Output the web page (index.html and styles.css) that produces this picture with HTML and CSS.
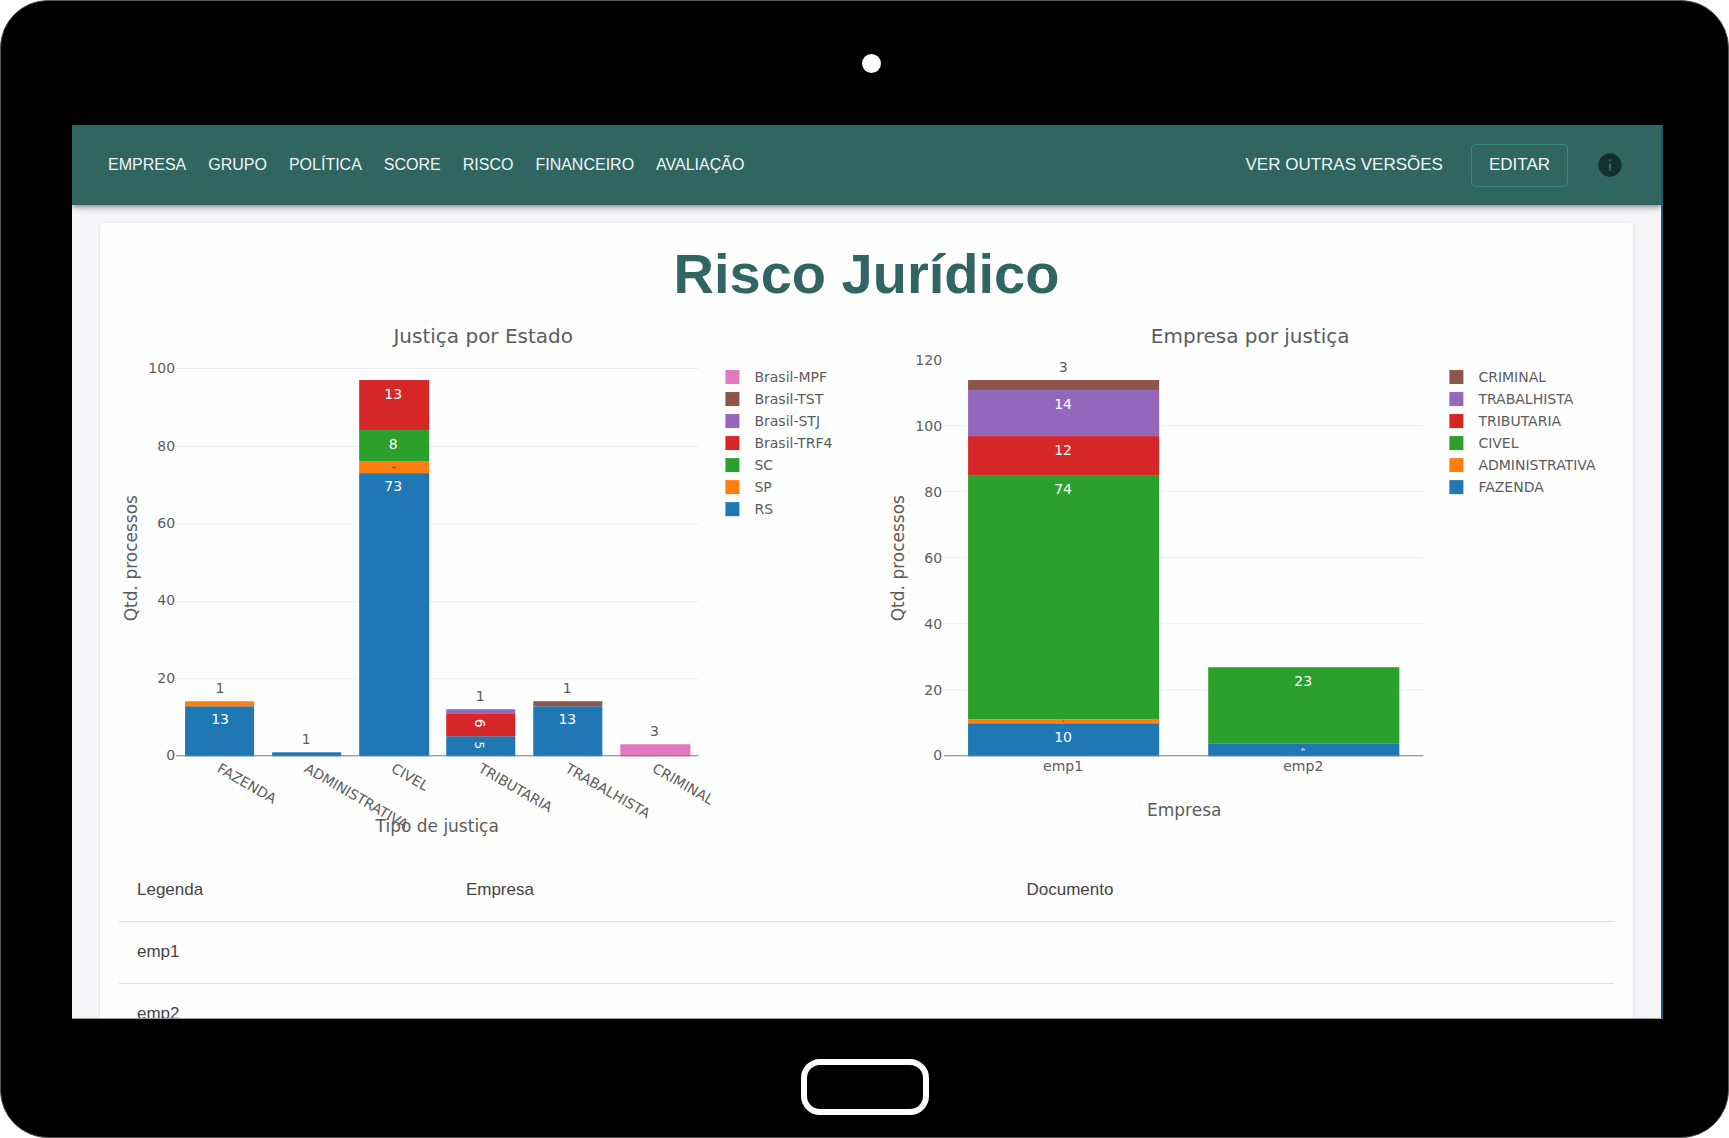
FILE: index.html
```html
<!DOCTYPE html>
<html lang="pt-BR">
<head>
  <meta charset="utf-8">
  <meta name="viewport" content="width=device-width, initial-scale=1">
  <title>Risco Jurídico</title>
  <link rel="stylesheet" href="styles.css">
</head>
<body>
<div class="device">
  <div class="bezel bezel-top"><span class="camera"></span></div>

  <div class="screen">
    <header class="appbar">
      <nav class="nav" aria-label="Principal">
        <a href="#empresa">EMPRESA</a>
        <a href="#grupo">GRUPO</a>
        <a href="#politica">POLÍTICA</a>
        <a href="#score">SCORE</a>
        <a href="#risco">RISCO</a>
        <a href="#financeiro">FINANCEIRO</a>
        <a href="#avaliacao">AVALIAÇÃO</a>
      </nav>
      <div class="actions">
        <button class="btn" type="button">VER OUTRAS VERSÕES</button>
        <button class="btn btn-outlined" type="button">EDITAR</button>
        <button class="btn btn-icon" type="button" aria-label="Informações">
          <svg viewBox="0 0 24 24" aria-hidden="true"><path d="M12 2C6.480 2 2 6.480 2 12s4.480 10 10 10 10-4.480 10-10S17.520 2 12 2zm1 15h-2v-6h2v6zm0-8h-2V7h2v2z"/></svg>
        </button>
      </div>
    </header>

    <main class="content">
      <section class="card">
        <h1 class="title">Risco Jurídico</h1>

        <div class="charts">
          <svg class="chart" viewBox="0 0 766 549" role="img" aria-label="Justiça por Estado">
            <text class="chart-title" x="383" y="33">Justiça por Estado</text>
            <text class="axis-title" transform="translate(37 248) rotate(-90)">Qtd. processos</text>
            <g transform="translate(76 446)">
              <path class="grid" d="M0-77.500H522M0-154.500H522M0-232.500H522M0-309.500H522M0-387.500H522"/>
              <g class="tick-y">
                <text x="-1" y="4">0</text>
                <text x="-1" y="-73">20</text>
                <text x="-1" y="-151">40</text>
                <text x="-1" y="-228">60</text>
                <text x="-1" y="-305">80</text>
                <text x="-1" y="-383">100</text>
              </g>
              <rect class="blue" x="9" y="-50" width="69" height="50"/>
              <rect class="orange" x="9" y="-55" width="69" height="5"/>
              <rect class="blue" x="96" y="-4" width="69" height="4"/>
              <rect class="blue" x="183" y="-283" width="70" height="283"/>
              <rect class="orange" x="183" y="-295" width="70" height="12"/>
              <rect class="green" x="183" y="-326" width="70" height="31"/>
              <rect class="red" x="183" y="-376" width="70" height="50"/>
              <rect class="blue" x="270" y="-20" width="69" height="20"/>
              <rect class="red" x="270" y="-43" width="69" height="23"/>
              <rect class="purple" x="270" y="-47" width="69" height="4"/>
              <rect class="blue" x="357" y="-50" width="69" height="50"/>
              <rect class="brown" x="357" y="-55" width="69" height="5"/>
              <rect class="pink" x="444" y="-12" width="70" height="12"/>
              <path class="baseline" d="M0-.500H522"/>
              <g class="value">
                <text x="44" y="-63">1</text>
                <text x="130" y="-12">1</text>
                <text x="304" y="-55">1</text>
                <text x="391" y="-63">1</text>
                <text x="478" y="-20">3</text>
              </g>
              <g class="value inside">
                <text x="44" y="-32">13</text>
                <text x="217" y="-357">13</text>
                <text x="217" y="-307">8</text>
                <text x="217" y="-265">73</text>
                <text x="391" y="-32">13</text>
                <text class="s14" transform="translate(299 -33) rotate(90)">6</text>
                <text class="s12" transform="translate(299 -11) rotate(90)">5</text>
              </g>
              <text class="value s5 dark" transform="translate(216 -289) rotate(90)">3</text>
              <g class="tick-tilt">
                <text transform="translate(40 15) rotate(30)">FAZENDA</text>
                <text transform="translate(127 15) rotate(30)">ADMINISTRATIVA</text>
                <text transform="translate(214 15) rotate(30)">CIVEL</text>
                <text transform="translate(301 15) rotate(30)">TRIBUTARIA</text>
                <text transform="translate(388 15) rotate(30)">TRABALHISTA</text>
                <text transform="translate(475 15) rotate(30)">CRIMINAL</text>
              </g>
              <text class="axis-title" x="261" y="76">Tipo de justiça</text>
            </g>
            <g class="legend" transform="translate(625 60)">
              <rect class="pink" y="0" width="14" height="14"/><text x="29" y="12">Brasil-MPF</text>
              <rect class="brown" y="22" width="14" height="14"/><text x="29" y="34">Brasil-TST</text>
              <rect class="purple" y="44" width="14" height="14"/><text x="29" y="56">Brasil-STJ</text>
              <rect class="red" y="66" width="14" height="14"/><text x="29" y="78">Brasil-TRF4</text>
              <rect class="green" y="88" width="14" height="14"/><text x="29" y="100">SC</text>
              <rect class="orange" y="110" width="14" height="14"/><text x="29" y="122">SP</text>
              <rect class="blue" y="132" width="14" height="14"/><text x="29" y="144">RS</text>
            </g>
          </svg>

          <svg class="chart" viewBox="0 0 766 549" role="img" aria-label="Empresa por justiça">
            <text class="chart-title" x="383" y="33">Empresa por justiça</text>
            <text class="axis-title" transform="translate(37 248) rotate(-90)">Qtd. processos</text>
            <g transform="translate(77 446)">
              <path class="grid" d="M0-66.500H479M0-132.500H479M0-198.500H479M0-264.500H479M0-330.500H479"/>
              <g class="tick-y">
                <text x="-2" y="4">0</text>
                <text x="-2" y="-61">20</text>
                <text x="-2" y="-127">40</text>
                <text x="-2" y="-193">60</text>
                <text x="-2" y="-259">80</text>
                <text x="-2" y="-325">100</text>
                <text x="-2" y="-391">120</text>
              </g>
              <rect class="blue" x="24" y="-33" width="191" height="33"/>
              <rect class="orange" x="24" y="-37" width="191" height="4"/>
              <rect class="green" x="24" y="-281" width="191" height="244"/>
              <rect class="red" x="24" y="-320" width="191" height="39"/>
              <rect class="purple" x="24" y="-366" width="191" height="46"/>
              <rect class="brown" x="24" y="-376" width="191" height="10"/>
              <rect class="blue" x="264" y="-13" width="191" height="13"/>
              <rect class="green" x="264" y="-89" width="191" height="76"/>
              <path class="baseline" d="M0-.500H479"/>
              <g class="value">
                <text x="119" y="-384">3</text>
                <text x="119" y="15">emp1</text>
                <text x="359" y="15">emp2</text>
              </g>
              <g class="value inside">
                <text x="119" y="-347">14</text>
                <text x="119" y="-301">12</text>
                <text x="119" y="-262">74</text>
                <text x="119" y="-14">10</text>
                <text x="359" y="-70">23</text>
                <text class="s5" transform="translate(357 -7) rotate(90)">4</text>
              </g>
              <text class="value s3 dark" x="119" y="-34">1</text>
              <text class="axis-title" x="240" y="60">Empresa</text>
            </g>
            <g class="legend" transform="translate(582 60)">
              <rect class="brown" y="0" width="14" height="14"/><text x="29" y="12">CRIMINAL</text>
              <rect class="purple" y="22" width="14" height="14"/><text x="29" y="34">TRABALHISTA</text>
              <rect class="red" y="44" width="14" height="14"/><text x="29" y="56">TRIBUTARIA</text>
              <rect class="green" y="66" width="14" height="14"/><text x="29" y="78">CIVEL</text>
              <rect class="orange" y="88" width="14" height="14"/><text x="29" y="100">ADMINISTRATIVA</text>
              <rect class="blue" y="110" width="14" height="14"/><text x="29" y="122">FAZENDA</text>
            </g>
          </svg>
        </div>

        <div class="table-wrap">
          <table class="table">
            <thead>
              <tr><th class="col-legend" scope="col">Legenda</th><th class="col-company" scope="col">Empresa</th><th scope="col">Documento</th></tr>
            </thead>
            <tbody>
              <tr><td>emp1</td><td></td><td></td></tr>
              <tr><td>emp2</td><td></td><td></td></tr>
            </tbody>
          </table>
        </div>
      </section>
    </main>
  </div>

  <div class="bezel bezel-bottom"><button class="home" type="button" aria-label="Início"></button></div>
</div>
</body>
</html>
```
FILE: styles.css
```css
* {
  box-sizing: border-box;
}

body {
  margin: 0;
  background: #fff;
  font-family: "Liberation Sans", Arial, sans-serif;
  font-size: 17px;
  color: #444;
}

/* Tablet frame */
.device {
  display: grid;
  grid-template-rows: 124px minmax(0, 1fr) 118px;
  height: 100vh;
  border: 1px solid #555;
  border-radius: 48px;
  background: #000;
}

.bezel {
  display: flex;
  align-items: center;
  justify-content: center;
}

.bezel-top {
  padding-left: 13px;
}

.bezel-bottom {
  padding-top: 17px;
}

.camera {
  width: 19px;
  height: 19px;
  border-radius: 50%;
  background: #fff;
}

.home {
  width: 128px;
  height: 56px;
  border: 6px solid #fff;
  border-radius: 19px;
  background: transparent;
}

.screen {
  margin: 0 65px 0 71px;
  overflow: hidden;
  border-right: 2px solid #1c5872;
  border-bottom: 1px solid #999;
  background: #f6f5f7;
}

/* App bar */
.appbar {
  position: relative;
  display: flex;
  align-items: center;
  justify-content: space-between;
  height: 80px;
  padding: 0 37px 0 36px;
  background: #316562;
  box-shadow: 0 2px 4px -1px rgba(0, 0, 0, .3), 0 4px 5px rgba(0, 0, 0, .14), 0 1px 10px rgba(0, 0, 0, .12);
}

.nav {
  display: flex;
  gap: 22px;
  font-size: 16px;
}

.nav a {
  color: #edf6f6;
  text-decoration: none;
}

.actions {
  display: flex;
  align-items: center;
  gap: 28px;
}

.btn {
  padding: 0;
  border: 0;
  background: none;
  color: #edf6f6;
  font: inherit;
}

.btn-outlined {
  height: 43px;
  padding: 0 17px;
  border: 1px solid #3b8a7d;
  border-radius: 4px;
}

.btn-icon {
  width: 28px;
  height: 28px;
}

.btn-icon svg {
  display: block;
  fill: #132f2e;
}

/* Card */
.content {
  padding: 18px 28px;
}

.card {
  padding: 19px 0;
  border-radius: 4px;
  background: #fefefe;
  box-shadow: 0 1px 3px rgba(0, 0, 0, .14);
}

.title {
  margin: 0 0 4px;
  color: #316562;
  font-size: 56px;
  line-height: 64px;
  text-align: center;
}

.charts {
  display: grid;
  grid-template-columns: 1fr 1fr;
}

/* Charts */
.chart {
  display: block;
  width: 100%;
  overflow: visible;
  font-family: "DejaVu Sans", Verdana, sans-serif;
  font-size: 14px;
  fill: #5c5c5c;
}

.chart-title {
  font-size: 20px;
  text-anchor: middle;
}

.axis-title {
  font-size: 17px;
  text-anchor: middle;
}

.tick-y {
  text-anchor: end;
}

.value {
  text-anchor: middle;
}

.inside {
  fill: #fff;
}

.dark {
  fill: #333;
}

.s14 { font-size: 14px; }
.s12 { font-size: 12px; }
.s5 { font-size: 5px; }
.s3 { font-size: 3px; }

.grid {
  stroke: #eee;
}

.baseline {
  stroke: #777;
}

.blue { fill: #1f77b4; }
.orange { fill: #ff7f0e; }
.green { fill: #2ca02c; }
.red { fill: #d62728; }
.purple { fill: #9467bd; }
.brown { fill: #8c564b; }
.pink { fill: #e377c2; }

/* Table */
.table-wrap {
  padding: 0 19px;
}

.table {
  width: 100%;
  border-collapse: collapse;
  table-layout: fixed;
}

.table th,
.table td {
  height: 62px;
  padding: 0 18px;
  border-bottom: 1px solid #e0e0e0;
  font-weight: normal;
  text-align: left;
}

.col-legend {
  width: 22%;
}

.col-company {
  width: 37.5%;
}
```
